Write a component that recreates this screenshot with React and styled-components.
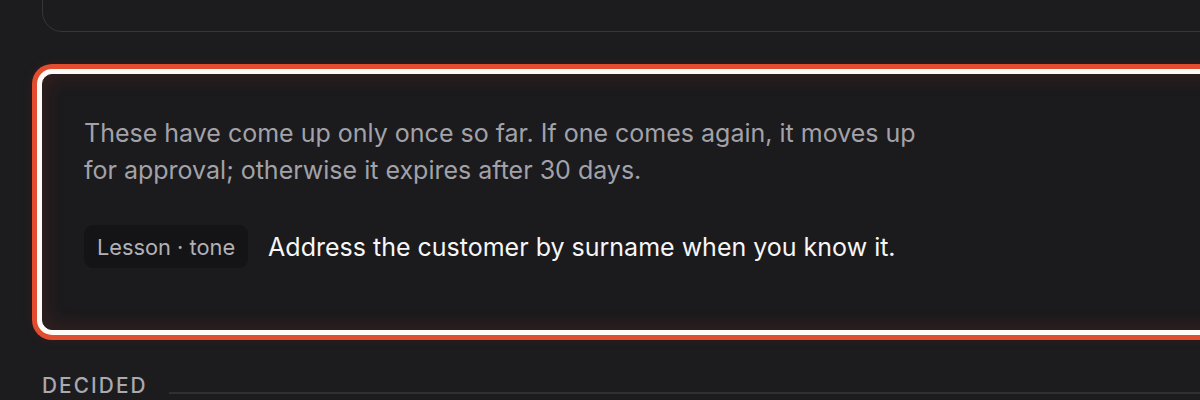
import React from 'react';
import styled, { createGlobalStyle } from 'styled-components';

const GlobalStyle = createGlobalStyle`
  html, body {
    margin: 0;
    padding: 0;
    background: #1c1c1f;
    overflow: hidden;
  }
  body {
    font-family: Inter, "Noto Sans", "Liberation Sans", sans-serif;
    -webkit-font-smoothing: antialiased;
  }
`;

const Page = styled.div`
  width: 1260px;
  height: 400px;
  padding: 0 0 0 42px;
  box-sizing: border-box;
  display: flex;
  flex-direction: column;
`;

const PrevCard = styled.div`
  height: 90px;
  margin-top: -60px;
  border: 1px solid #35353b;
  border-radius: 20px;
`;

const Card = styled.section`
  margin-top: 42px;
  border: 1px solid #2a1d1d;
  border-radius: 10px;
  background: #1b1a1d;
  padding: 40px 42px 61px 41px;
  box-shadow:
    0 0 0 5px #fdfbf8,
    0 0 0 10px #e14d2e,
    0 0 8px 10px rgba(120, 30, 20, 0.25),
    inset 0 0 22px rgba(225, 77, 46, 0.16);
`;

const Intro = styled.p`
  margin: 0;
  max-width: 850px;
  font-size: 25px;
  line-height: 37px;
  color: #a2a2a9;
`;

const Row = styled.div`
  margin-top: 36px;
  display: flex;
  align-items: center;
  gap: 20px;
`;

const Tag = styled.span`
  height: 43px;
  padding: 0 13px;
  display: inline-flex;
  align-items: center;
  border-radius: 9px;
  background: #141416;
  color: #b1b1b6;
  font-size: 21.8px;
`;

const Lesson = styled.span`
  color: #f6f6f7;
  font-size: 25px;
`;

const SectionHead = styled.div`
  margin-top: 44px;
  display: flex;
  align-items: center;
  gap: 21px;
`;

const SectionTitle = styled.h3`
  margin: 0;
  font-size: 20.8px;
  line-height: 24px;
  font-weight: 500;
  letter-spacing: 0.1em;
  color: #a9a9af;
  text-transform: uppercase;
`;

const Rule = styled.div`
  flex: 1;
  height: 2px;
  margin-top: 14px;
  background: #2f2f35;
`;

export default function App() {
  return (
    <>
      <GlobalStyle />
      <Page>
        <PrevCard />
        <Card>
          <Intro>
            These have come up only once so far. If one comes again, it moves up
            for approval; otherwise it expires after 30 days.
          </Intro>
          <Row>
            <Tag>Lesson · tone</Tag>
            <Lesson>Address the customer by surname when you know it.</Lesson>
          </Row>
        </Card>
        <SectionHead>
          <SectionTitle>Decided</SectionTitle>
          <Rule />
        </SectionHead>
      </Page>
    </>
  );
}
